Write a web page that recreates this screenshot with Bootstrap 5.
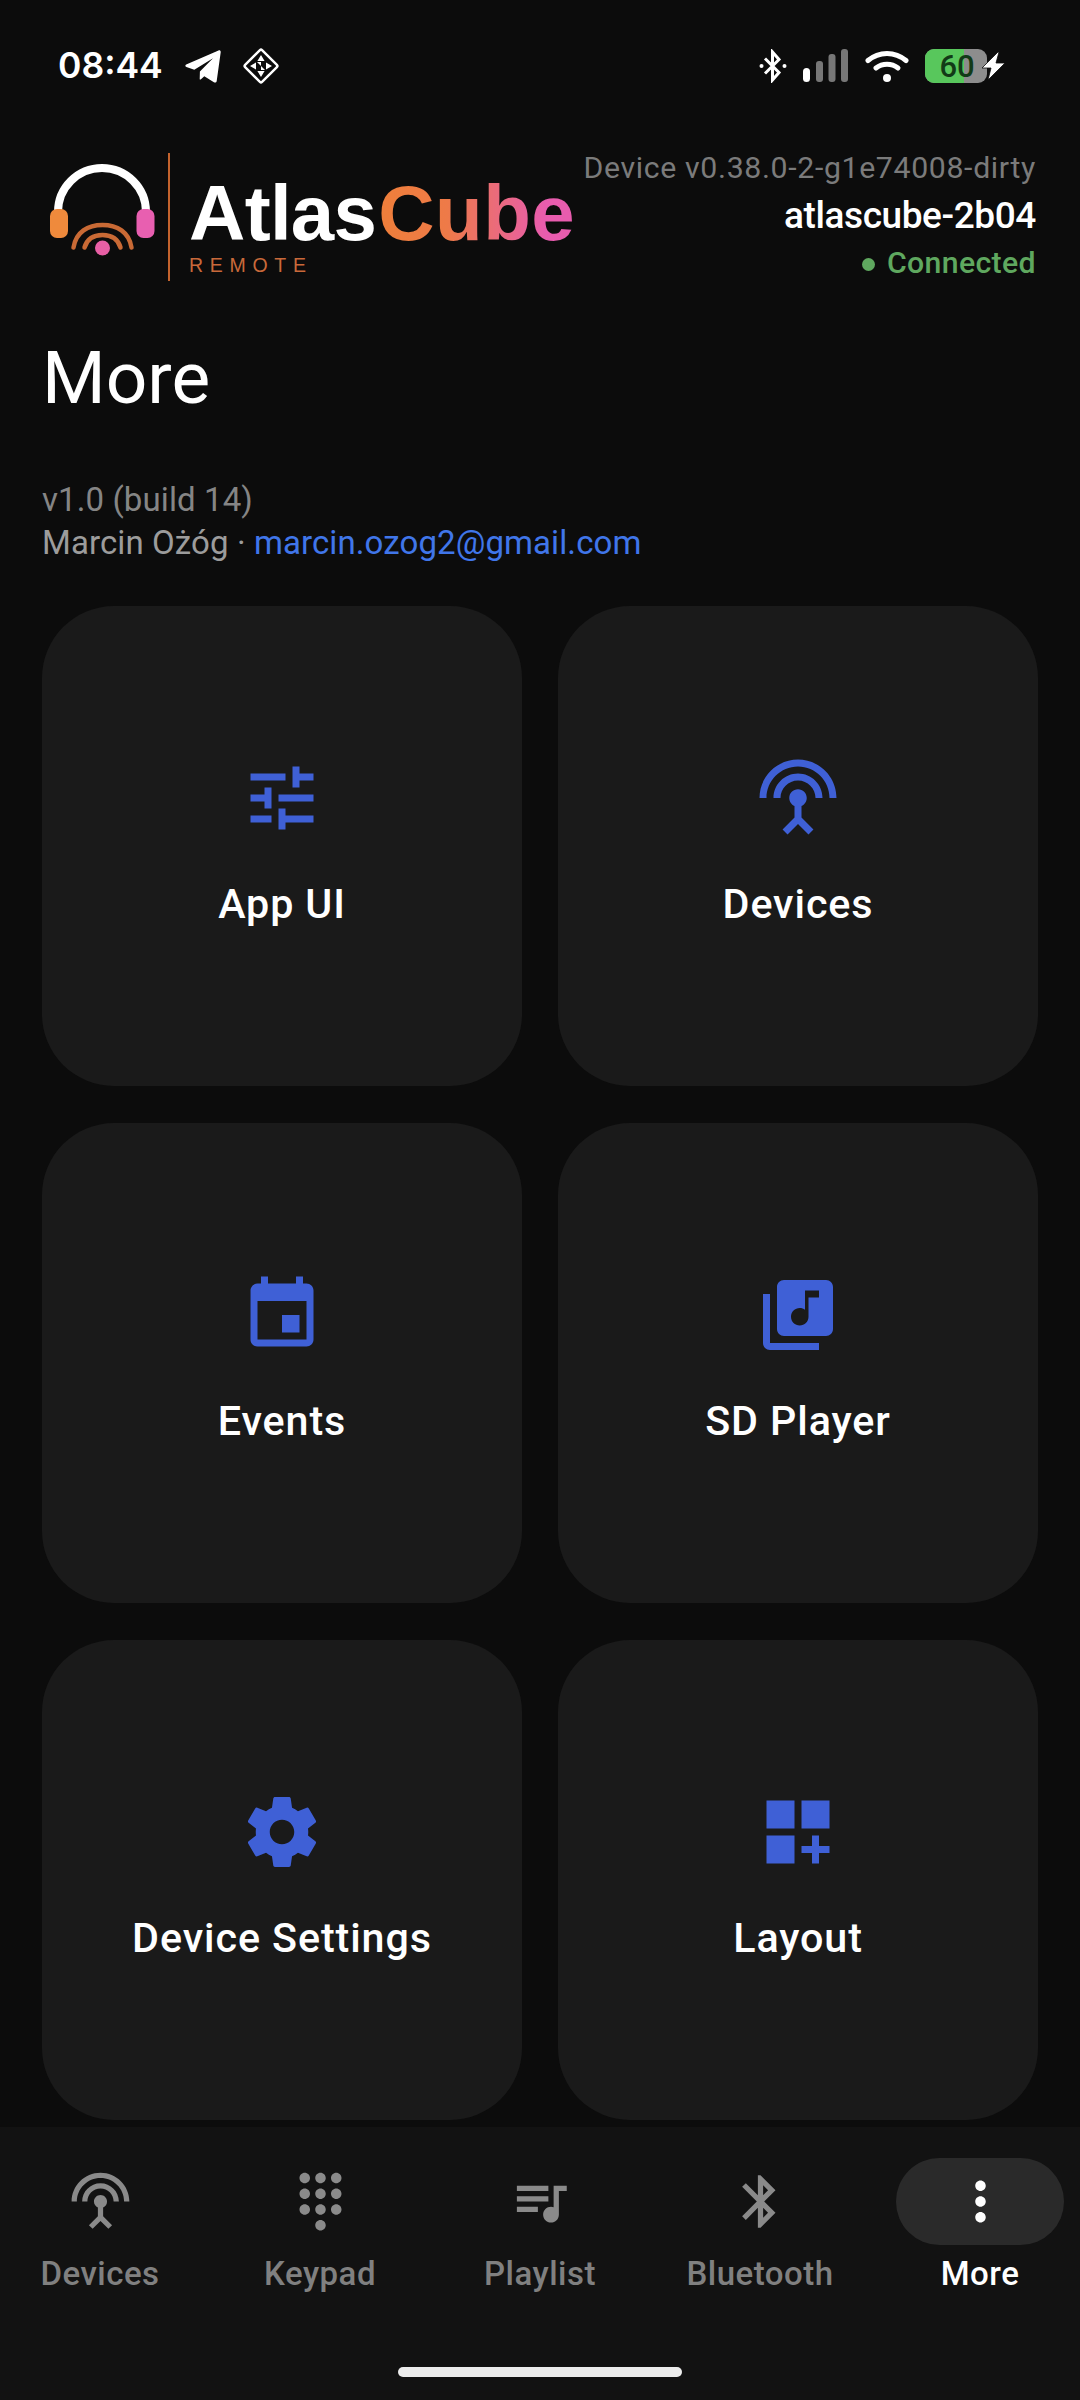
<!DOCTYPE html>
<html lang="en">
<head>
    <meta charset="UTF-8">
    <title>AtlasCube Remote | More</title>
    <link href="https://cdn.jsdelivr.net/npm/bootstrap@5.3.0/dist/css/bootstrap.min.css" rel="stylesheet">
    <style>
        html, body { margin: 0; background: #0c0c0c; }
        body { font-family: Roboto, "Liberation Sans", sans-serif; color: #fff; }
        .app-shell { width: 1080px; height: 2400px; overflow: hidden; }
        .status-row { height: 92px; padding: 40px 73px 0 58px; }
        .status-time { font: 600 35.5px/42px Inter, Roboto, sans-serif; width: 102px; margin-right: 25px; white-space: nowrap; }
        .status-plane { margin-right: 21px; }
        .app-head { padding: 61px 44px 0 50px; height: 238px; }
        .logo-mark { margin-top: 7px; }
        .logo-divider { width: 2px; height: 128px; margin: 0 19px 0 12px; background: #c4632d; }
        .logo-text { padding-top: 30px; font-family: "Liberation Sans", Arial, sans-serif; }
        .logo-name { font-size: 78px; line-height: 60px; font-weight: 700; letter-spacing: -.7px; white-space: nowrap; }
        .logo-cube { background: linear-gradient(90deg, #ef7f3a 0%, #ee7a48 35%, #e85cae 85%); -webkit-background-clip: text; background-clip: text; color: transparent; margin-left: 2px; letter-spacing: .5px; }
        .logo-sub { font-size: 19.5px; line-height: 22px; letter-spacing: 6.7px; color: #c9693a; margin-top: 11px; }
        .head-info { margin-left: auto; margin-top: -6px; text-align: right; white-space: nowrap; }
        .head-version { font-size: 30.25px; line-height: 42px; letter-spacing: .65px; color: #7b7b7b; }
        .head-name { font-size: 37px; line-height: 54px; font-weight: 500; letter-spacing: -.4px; }
        .head-state { font-size: 30.25px; line-height: 40px; letter-spacing: .35px; color: #5fa85f; font-weight: 500; }
        .head-dot { display: inline-block; width: 13px; height: 13px; border-radius: 50%; background: #5fa85f; margin-right: 12px; vertical-align: 2px; }
        .page-title { font-size: 73px; line-height: 96px; font-weight: 400; margin: 0 0 0 42px; }
        .about-lines { margin: 52px 0 0 42px; font-size: 33px; line-height: 43px; color: #9c9c9c; letter-spacing: .1px; height: 86px; }
        .about-lines .about-build { color: #858585; }
        .about-lines a { color: #4076ea; text-decoration: none; }
        .tile-grid { display: grid; grid-template-columns: 480px 480px; grid-auto-rows: 480px; gap: 37px 36px; margin: 42px 42px 0; }
        .tile { background: #1a1a1a; border: 0; border-radius: 72px; color: #fff; padding-bottom: 4px; }
        .tile-icon { width: 84px; height: 84px; fill: #3f60d6; }
        .tile-label { font-size: 41.25px; line-height: 56px; font-weight: 500; letter-spacing: .9px; margin-top: 35.5px; }
        .bottom-nav { position: absolute; left: 0; right: 0; top: 2127px; height: 273px; background: #121212; }
        .nav-items { margin: 0 -10px; padding-top: 31px; }
        .nav-tab { width: 220px; color: #808080; text-decoration: none; font-size: 33px; line-height: 44px; font-weight: 500; letter-spacing: .5px; }
        .nav-pill { width: 168px; height: 87px; border-radius: 44px; margin-bottom: 7px; }
        .nav-pill svg { width: 63px; height: 63px; fill: #8a8a8a; }
        .nav-tab.is-active { color: #fff; }
        .nav-tab.is-active .nav-pill { background: #2a2a2a; }
        .nav-tab.is-active svg { fill: #fff; }
        .home-bar { width: 284px; height: 10px; border-radius: 5px; background: #ececec; margin: 71px auto 0; }
    </style>
</head>
<body>
    <svg width="0" height="0" class="position-absolute">
        <symbol id="ic-tune" viewBox="0 0 24 24"><path d="M3 17v2h6v-2H3zM3 5v2h10V5H3zm10 16v-2h8v-2h-8v-2h-2v6h2zM7 9v2H3v2h4v2h2V9H7zm14 4v-2H11v2h10zm-6-4h2V7h4V5h-4V3h-2v6z"/></symbol>
        <symbol id="ic-antenna" viewBox="0 0 24 24"><path d="M12 5c-3.87 0-7 3.13-7 7h2c0-2.76 2.24-5 5-5s5 2.24 5 5h2c0-3.87-3.13-7-7-7zm1 9.29c.88-.39 1.5-1.26 1.5-2.29 0-1.38-1.12-2.5-2.5-2.5S9.5 10.62 9.5 12c0 1.02.62 1.9 1.5 2.29v3.3L7.59 21 9 22.41l3-3 3 3L16.41 21 13 17.59v-3.3zM12 1C5.93 1 1 5.93 1 12h2c0-4.97 4.03-9 9-9s9 4.03 9 9h2c0-6.07-4.93-11-11-11z"/></symbol>
        <symbol id="ic-event" viewBox="0 0 24 24"><path d="M17 12h-5v5h5v-5zM16 1v2H8V1H6v2H5c-1.11 0-1.99.9-1.99 2L3 19c0 1.1.89 2 2 2h14c1.1 0 2-.9 2-2V5c0-1.1-.9-2-2-2h-1V1h-2zm3 18H5V8h14v11z"/></symbol>
        <symbol id="ic-library" viewBox="0 0 24 24"><path d="M20 2H8c-1.1 0-2 .9-2 2v12c0 1.1.9 2 2 2h12c1.1 0 2-.9 2-2V4c0-1.1-.9-2-2-2zm-2 5h-3v5.5c0 1.38-1.12 2.5-2.5 2.5S10 13.88 10 12.5s1.12-2.5 2.5-2.5c.57 0 1.08.19 1.5.51V5h4v2zM4 6H2v14c0 1.1.9 2 2 2h14v-2H4V6z"/></symbol>
        <symbol id="ic-settings" viewBox="0 0 24 24"><path d="M19.43 12.98c.04-.32.07-.64.07-.98s-.03-.66-.07-.98l2.11-1.65c.19-.15.24-.42.12-.64l-2-3.46c-.12-.22-.39-.3-.61-.22l-2.49 1c-.52-.4-1.08-.73-1.69-.98l-.38-2.65C14.46 2.18 14.25 2 14 2h-4c-.25 0-.46.18-.49.42l-.38 2.65c-.61.25-1.17.59-1.69.98l-2.49-1c-.23-.09-.49 0-.61.22l-2 3.46c-.13.22-.07.49.12.64l2.11 1.65c-.04.32-.07.65-.07.98s.03.66.07.98l-2.11 1.65c-.19.15-.24.42-.12.64l2 3.46c.12.22.39.3.61.22l2.49-1c.52.4 1.08.73 1.69.98l.38 2.65c.03.24.24.42.49.42h4c.25 0 .46-.18.49-.42l.38-2.65c.61-.25 1.17-.59 1.69-.98l2.49 1c.23.09.49 0 .61-.22l2-3.46c.12-.22.07-.49-.12-.64l-2.11-1.65zM12 15.5c-1.93 0-3.5-1.57-3.5-3.5s1.57-3.5 3.5-3.5 3.5 1.57 3.5 3.5-1.57 3.5-3.5 3.5z"/></symbol>
        <symbol id="ic-layout" viewBox="0 0 24 24"><path d="M3 3h8v8H3zm10 0h8v8h-8zM3 13h8v8H3zm15 0h-2v3h-3v2h3v3h2v-3h3v-2h-3z"/></symbol>
        <symbol id="ic-dialpad" viewBox="0 0 24 24"><path d="M12 19c-1.1 0-2 .9-2 2s.9 2 2 2 2-.9 2-2-.9-2-2-2zM6 1c-1.1 0-2 .9-2 2s.9 2 2 2 2-.9 2-2-.9-2-2-2zm0 6c-1.1 0-2 .9-2 2s.9 2 2 2 2-.9 2-2-.9-2-2-2zm0 6c-1.1 0-2 .9-2 2s.9 2 2 2 2-.9 2-2-.9-2-2-2zm12-8c1.1 0 2-.9 2-2s-.9-2-2-2-2 .9-2 2 .9 2 2 2zm-6 8c-1.1 0-2 .9-2 2s.9 2 2 2 2-.9 2-2-.9-2-2-2zm6 0c-1.1 0-2 .9-2 2s.9 2 2 2 2-.9 2-2-.9-2-2-2zm0-6c-1.1 0-2 .9-2 2s.9 2 2 2 2-.9 2-2-.9-2-2-2zm-6 0c-1.1 0-2 .9-2 2s.9 2 2 2 2-.9 2-2-.9-2-2-2zm0-6c-1.1 0-2 .9-2 2s.9 2 2 2 2-.9 2-2-.9-2-2-2z"/></symbol>
        <symbol id="ic-queue" viewBox="0 0 24 24"><path d="M15 6H3v2h12V6zm0 4H3v2h12v-2zM3 16h8v-2H3v2zM17 6v8.18c-.31-.11-.65-.18-1-.18-1.66 0-3 1.34-3 3s1.34 3 3 3 3-1.34 3-3V8h3V6h-5z"/></symbol>
        <symbol id="ic-bluetooth" viewBox="0 0 24 24"><path d="M17.71 7.71L12 2h-1v7.59L6.41 5 5 6.41 10.59 12 5 17.59 6.41 19 11 14.41V22h1l5.71-5.71-4.3-4.29 4.3-4.29zM13 5.83l1.88 1.88L13 9.59V5.83zm1.88 10.46L13 18.17v-3.76l1.88 1.88z"/></symbol>
        <symbol id="ic-more" viewBox="0 0 24 24"><path d="M12 8c1.1 0 2-.9 2-2s-.9-2-2-2-2 .9-2 2 .9 2 2 2zm0 2c-1.1 0-2 .9-2 2s.9 2 2 2 2-.9 2-2-.9-2-2-2zm0 6c-1.1 0-2 .9-2 2s.9 2 2 2 2-.9 2-2-.9-2-2-2z"/></symbol>
    </svg>

    <div class="app-shell position-relative">
        <!-- status bar -->
        <div class="status-row d-flex align-items-center">
            <span class="status-time">08:44</span>
            <svg width="36" height="33" viewBox="0 0 36 33" fill="#fff" class="status-plane"><path d="M1.2 14.6 33.5.4c1.3-.5 2.4.4 2.2 1.8L31.700 31c-.2 1.500-1.600 2-2.800 1.300l-9.600-6.100-3.600 3.200c-.5.4-1 .2-1-.4l.2-7.400L28 8.300 9.300 19.700 1.400 16.900c-1.300-.5-1.400-1.800-.2-2.300z"/></svg>
            <svg width="38" height="38" viewBox="0 0 38 38" fill="none"><rect x="7" y="7" width="24" height="24" rx="1.500" transform="rotate(45 19 19)" stroke="#fff" stroke-width="2.400"/><path d="M19 8l3.600 6h-7.200zM30 19l-6 3.600v-7.200zM19 30l-3.600-6h7.200zM8 19l6-3.600v7.200zM19 19l-4-4h4zM19 19l4 4h-4z" fill="#fff"/></svg>
            <div class="ms-auto d-flex align-items-center">
                <svg width="28" height="34" viewBox="0 0 28 34" fill="none" stroke="#fff" stroke-width="3"><path d="M6 9.500 20 23.500 13.500 31V3L20 10.500 6 24.500"/><circle cx="2.500" cy="17" r="2" fill="#fff" stroke="none"/><circle cx="25.500" cy="17" r="2" fill="#fff" stroke="none"/></svg>
                <svg width="46" height="34" viewBox="0 0 46 34" class="ms-3"><rect x="0" y="19" width="7" height="14" rx="3.500" fill="#fff"/><rect x="13" y="12" width="7" height="21" rx="3" fill="#777"/><rect x="25.500" y="5" width="7" height="28" rx="3" fill="#777"/><rect x="38" y="0" width="7" height="33" rx="3" fill="#777"/></svg>
                <svg width="44" height="33" viewBox="0 0 44 33" fill="none" stroke="#fff" stroke-width="5" stroke-linecap="round" class="ms-3"><path d="M3 10.500c11-9.500 27-9.500 38 0"/><path d="M11 18c6.500-5 15.500-5 22 0"/><circle cx="22" cy="28" r="4" fill="#fff" stroke="none"/></svg>
                <svg width="82" height="36" viewBox="0 0 82 36" class="ms-3"><rect x="0" y="1" width="62" height="34" rx="9" fill="#8d8d8d"/><path d="M9 1h30v34H9a9 9 0 0 1-9-9V10a9 9 0 0 1 9-9z" fill="#58c75c"/><text x="32" y="29" text-anchor="middle" font-family="Roboto, sans-serif" font-size="31" font-weight="500" fill="#123a17">60</text><path d="M73 4 57 20h9l-3 12 17-17h-9l3-11z" fill="#fff" stroke="#0c0c0c" stroke-width=".8"/></svg>
            </div>
        </div>

        <!-- logo + device info -->
        <div class="app-head d-flex align-items-start">
            <svg width="106" height="97" viewBox="50 160 106 97" class="logo-mark flex-shrink-0" fill="none">
                <path d="M58 212A44 44 0 0 1 146 212" stroke="#fff" stroke-width="8"/>
                <rect x="50" y="209" width="18" height="29" rx="7" fill="#ef8a3c"/>
                <rect x="136.500" y="209" width="18" height="29" rx="7" fill="#e85fb0"/>
                <path d="M73.500 247.500C76 232 88 225 102.500 225S129 232 131.500 247.500" stroke="#c96a35" stroke-width="4.500" stroke-linecap="round"/>
                <path d="M84.500 247.500C87 239 94 235 102.500 235S118 239 120.500 247.500" stroke="#c96a35" stroke-width="4.500" stroke-linecap="round"/>
                <circle cx="102.500" cy="248" r="7.500" fill="#e85fa5"/>
            </svg>
            <div class="logo-divider flex-shrink-0"></div>
            <div class="logo-text">
                <div class="logo-name">Atlas<span class="logo-cube">Cube</span></div>
                <div class="logo-sub">REMOTE</div>
            </div>
            <div class="head-info">
                <div class="head-version">Device v0.38.0-2-g1e74008-dirty</div>
                <div class="head-name">atlascube-2b04</div>
                <div class="head-state"><span class="head-dot"></span>Connected</div>
            </div>
        </div>

        <h1 class="page-title">More</h1>
        <div class="about-lines">
            <div class="about-build">v1.0 (build 14)</div>
            <div>Marcin Ożóg · <a href="#">marcin.ozog2@gmail.com</a></div>
        </div>

        <div class="tile-grid">
            <div class="card tile align-items-center justify-content-center"><svg class="tile-icon"><use href="#ic-tune"/></svg><div class="tile-label">App UI</div></div>
            <div class="card tile align-items-center justify-content-center"><svg class="tile-icon"><use href="#ic-antenna"/></svg><div class="tile-label">Devices</div></div>
            <div class="card tile align-items-center justify-content-center"><svg class="tile-icon"><use href="#ic-event"/></svg><div class="tile-label">Events</div></div>
            <div class="card tile align-items-center justify-content-center"><svg class="tile-icon"><use href="#ic-library"/></svg><div class="tile-label">SD Player</div></div>
            <div class="card tile align-items-center justify-content-center"><svg class="tile-icon"><use href="#ic-settings"/></svg><div class="tile-label">Device Settings</div></div>
            <div class="card tile align-items-center justify-content-center"><svg class="tile-icon"><use href="#ic-layout"/></svg><div class="tile-label">Layout</div></div>
        </div>

        <!-- bottom tabs -->
        <nav class="bottom-nav">
            <div class="nav-items d-flex">
                <a class="nav-tab d-flex flex-column align-items-center" href="#"><span class="nav-pill d-flex align-items-center justify-content-center"><svg><use href="#ic-antenna"/></svg></span>Devices</a>
                <a class="nav-tab d-flex flex-column align-items-center" href="#"><span class="nav-pill d-flex align-items-center justify-content-center"><svg><use href="#ic-dialpad"/></svg></span>Keypad</a>
                <a class="nav-tab d-flex flex-column align-items-center" href="#"><span class="nav-pill d-flex align-items-center justify-content-center"><svg><use href="#ic-queue"/></svg></span>Playlist</a>
                <a class="nav-tab d-flex flex-column align-items-center" href="#"><span class="nav-pill d-flex align-items-center justify-content-center"><svg><use href="#ic-bluetooth"/></svg></span>Bluetooth</a>
                <a class="nav-tab is-active d-flex flex-column align-items-center" href="#"><span class="nav-pill d-flex align-items-center justify-content-center"><svg><use href="#ic-more"/></svg></span>More</a>
            </div>
            <div class="home-bar"></div>
        </nav>
    </div>
</body>
</html>
